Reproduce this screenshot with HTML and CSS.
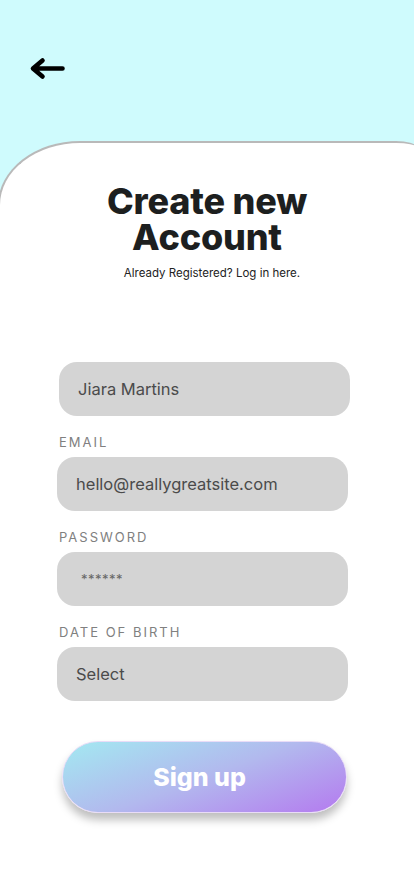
FILE: index.html
```html
<!DOCTYPE html>
<html>
<head>
<meta charset="utf-8">
<link rel="stylesheet" href="styles.css">
</head>
<body>
<div class="screen">
  <header class="top">
    <svg class="back" width="38" height="26" viewBox="0 0 38 26">
      <path d="M34.5 11.5 H6 M14.5 3.5 L5 11.5 L14.5 19.5" fill="none" stroke="#000" stroke-width="4.6" stroke-linecap="round" stroke-linejoin="round"/>
    </svg>
  </header>
  <main class="card">
    <h1 class="title"><span class="line">Create new</span><span class="line">Account</span></h1>
    <p class="sub">Already Registered? Log in here.</p>
    <form class="form">
      <div class="field name"><span class="value">Jiara Martins</span></div>
      <label class="label">EMAIL</label>
      <div class="field"><span class="value">hello@reallygreatsite.com</span></div>
      <label class="label">PASSWORD</label>
      <div class="field"><span class="value pw">******</span></div>
      <label class="label">DATE OF BIRTH</label>
      <div class="field"><span class="value">Select</span></div>
      <div class="btn">Sign up</div>
    </form>
  </main>
</div>
</body>
</html>
```

FILE: styles.css
```css
* { box-sizing: border-box; }
html, body { margin: 0; padding: 0; }
body {
  background: #cffbfd;
  font-family: "Inter", "Noto Sans", sans-serif;
  width: 414px;
  height: 896px;
  overflow: hidden;
}
.screen { display: flex; flex-direction: column; height: 896px; }
.top {
  height: 141px;
  padding: 57px 0 0 28px;
}
.back { display: block; }
.card {
  flex: 1;
  background: #fff;
  border-top: 2px solid #b9b9b9;
  border-left: 2px solid #b9b9b9;
  border-top-left-radius: 82px 64px;
  border-top-right-radius: 20px 6px;
  margin-left: -2px;
  margin-right: -2px;
  padding-top: 40px;
}
.title {
  margin: 0;
  display: flex;
  flex-direction: column;
  align-items: center;
  font-family: "Inter", sans-serif;
  font-weight: 800;
  font-size: 36px;
  line-height: 36px;
  letter-spacing: -0.2px;
  color: #1d1f1f;
  padding-right: 2px;
}
.line { display: block; }
.sub {
  margin: 11px 0 0;
  text-align: center;
  font-size: 11.5px;
  color: #222;
  padding-left: 8px;
}
.form {
  display: flex;
  flex-direction: column;
  padding: 82px 0 0 57px;
}
.field {
  width: 291px;
  height: 54px;
  background: #d4d4d4;
  border-radius: 18px;
  display: flex;
  align-items: center;
  padding-left: 19px;
}
.field.name { margin-left: 2px; }
.value {
  font-size: 16.5px;
  color: #4b4b4b;
}
.value.pw { font-size: 13px; color: #666; letter-spacing: 0.5px; padding-left: 5px; }
.label {
  font-size: 13px;
  letter-spacing: 2px;
  color: #808080;
  margin: 18px 0 7px 2px;
  line-height: 16px;
}
.btn {
  margin: 40px 0 0 5px;
  width: 285px;
  height: 72px;
  border-radius: 36px;
  background: linear-gradient(160deg, #a3e9f1 0%, #b2b9ee 50%, #b47aef 100%);
  border: 1px solid #e9dcf7;
  box-shadow: 0 7px 8px rgba(0,0,0,0.25);
  display: flex;
  align-items: center;
  justify-content: center;
  color: #fff;
  font-weight: 800;
  font-size: 25px;
  padding-right: 10px;
}
```
